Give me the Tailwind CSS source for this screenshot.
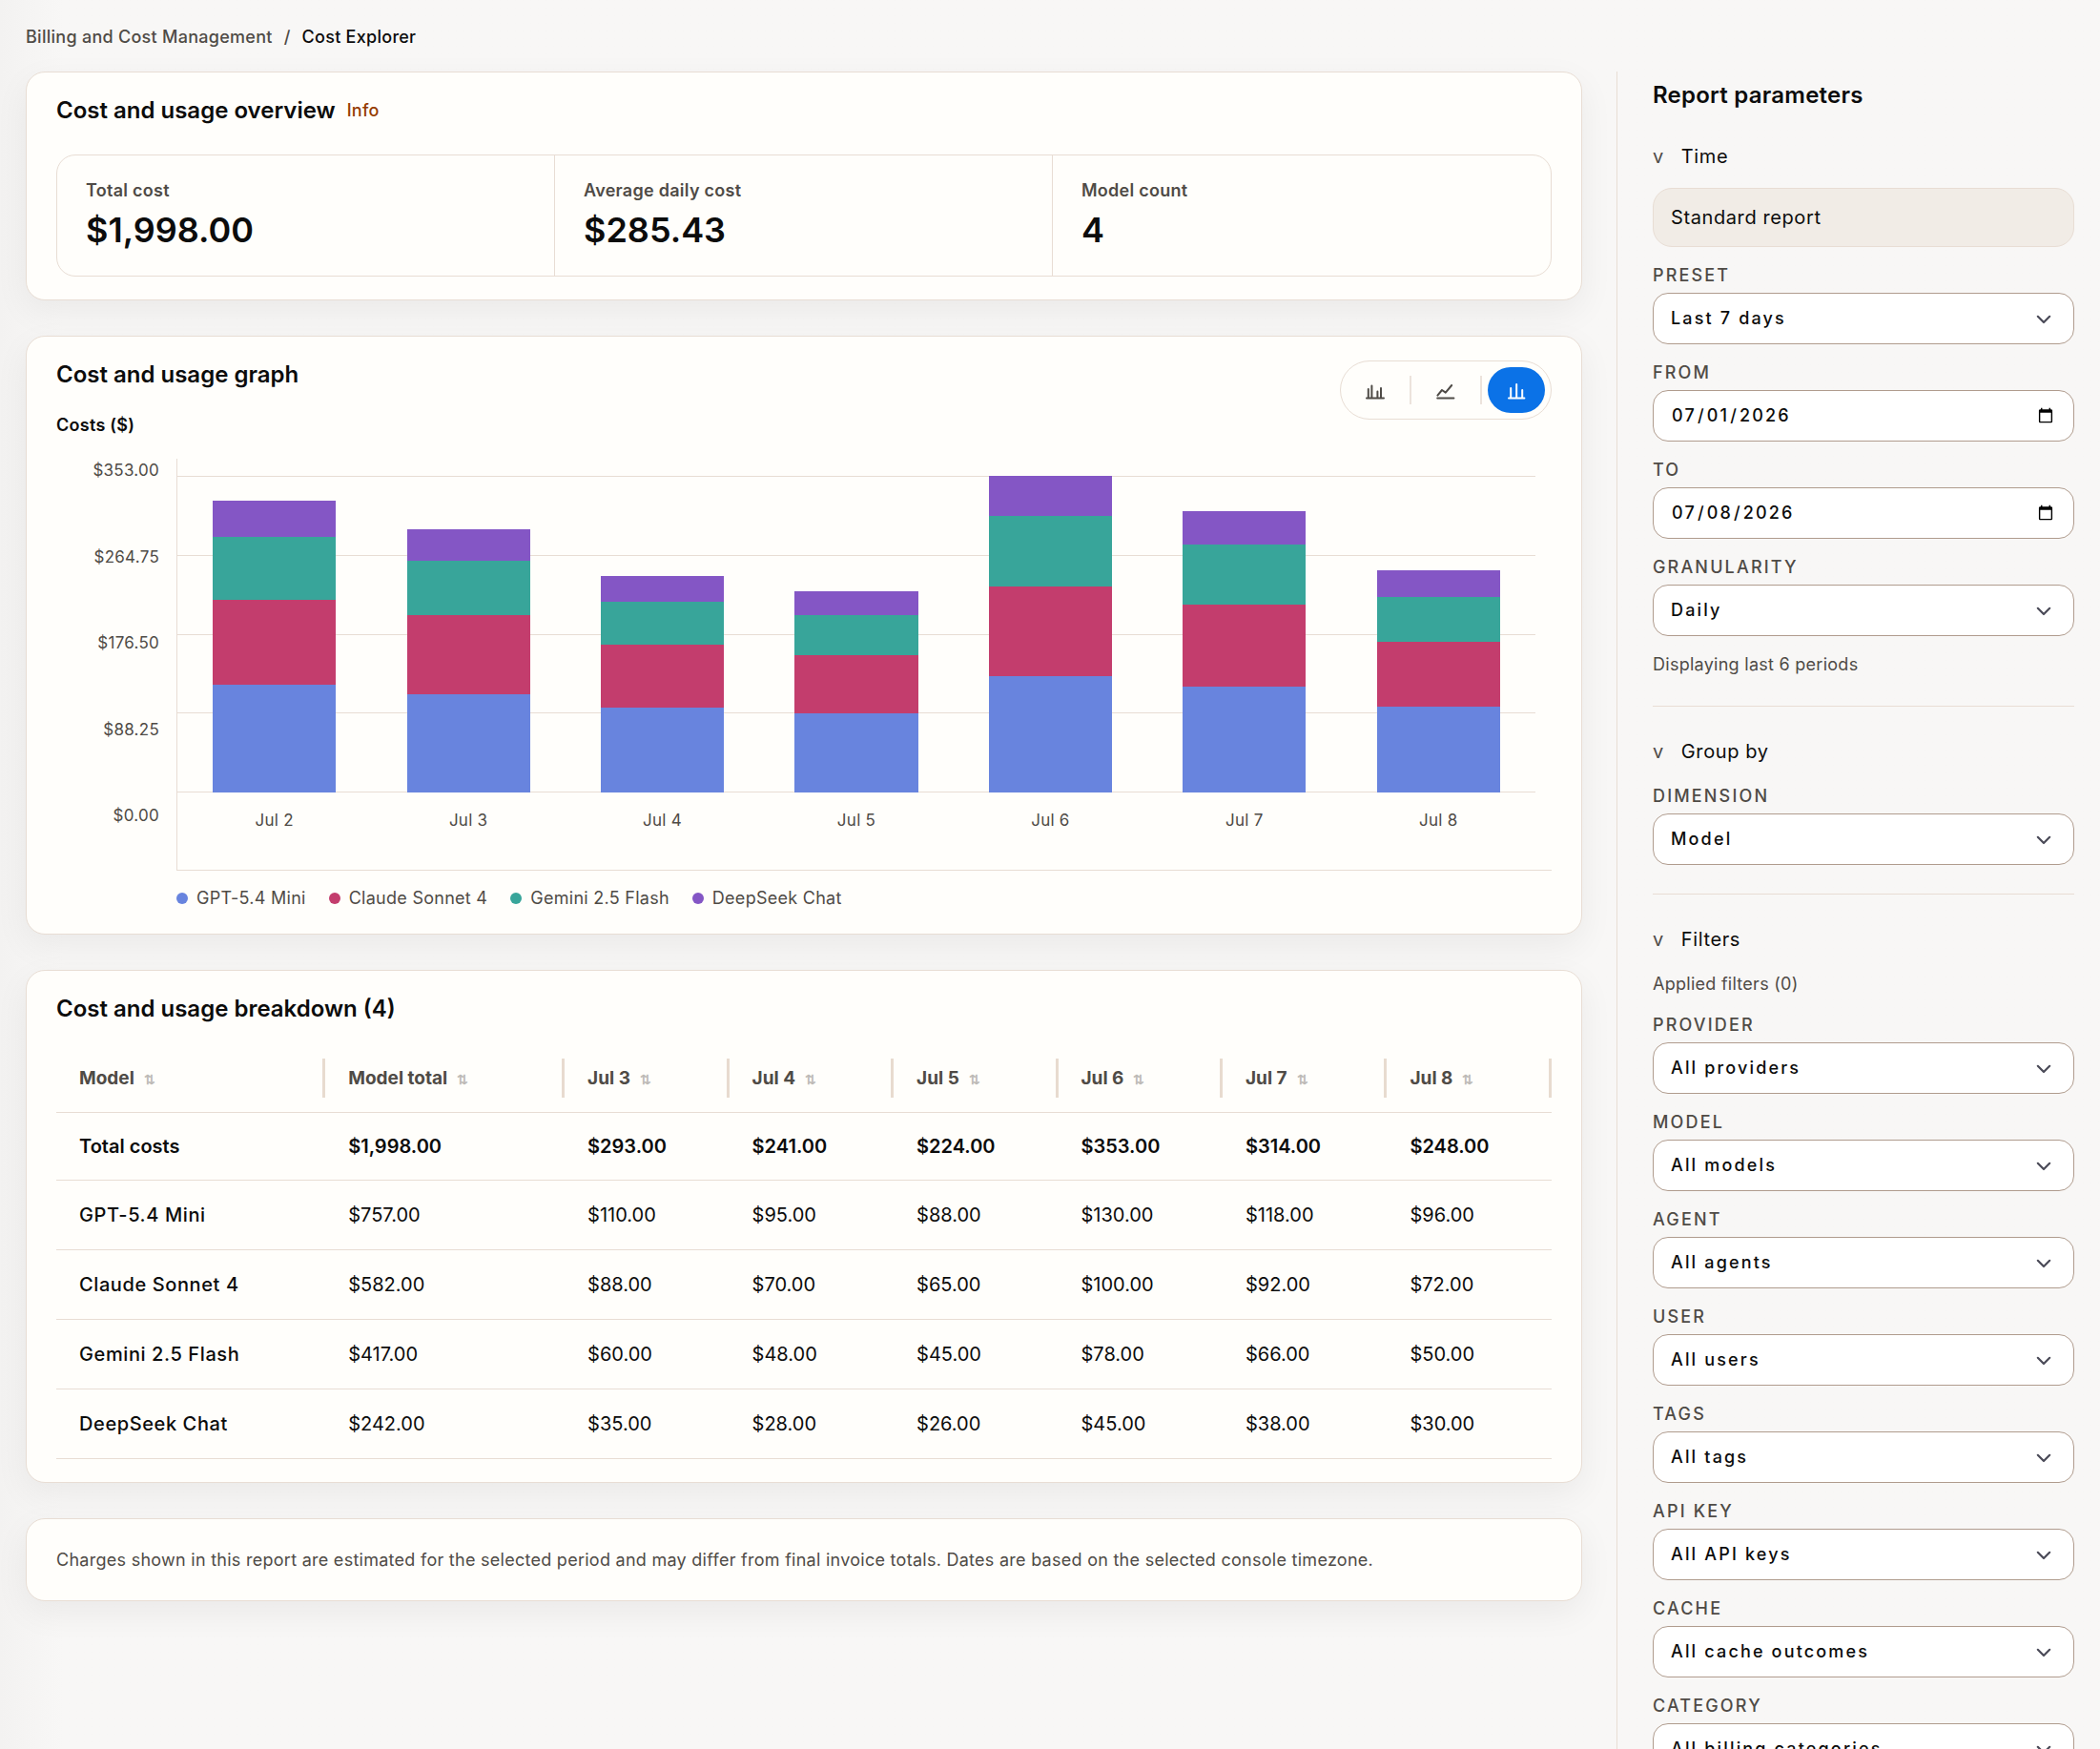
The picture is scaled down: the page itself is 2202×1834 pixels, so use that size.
<!DOCTYPE html>
<html lang="en">
<head>
  <meta charset="UTF-8">
  <meta name="viewport" content="width=device-width, initial-scale=1.0">
  <title>Cost Explorer</title>
  <script src="https://cdn.jsdelivr.net/npm/@tailwindcss/browser@4"></script>
</head>
<body class="bg-[#f8f7f6] bg-linear-to-r from-[#f3f2f1] from-0% to-[#f8f7f6] to-3% font-[Inter,sans-serif] text-lg text-[#0c0c0c]">
  <div class="h-screen overflow-hidden">
    <!-- Breadcrumb -->
    <nav class="flex gap-3 px-[27px] pt-[25px] pb-[23px] font-medium leading-[27px] tracking-[0.015em]">
      <a href="#" class="text-[#4f4b46]">Billing and Cost Management</a>
      <span class="text-[#4f4b46]">/</span>
      <span>Cost Explorer</span>
    </nav>

    <div class="flex gap-9 px-[27px]">
      <main class="flex min-w-0 flex-1 flex-col gap-[37px]">
        <!-- Overview -->
        <section class="rounded-[20px] border border-[#e8ddd4] bg-[#fffefb] px-[31px] pt-[22px] pb-6 shadow-[0_12px_36px_rgba(0,0,0,0.06)]">
          <div class="flex items-center gap-3">
            <h2 class="text-2xl font-semibold leading-9">Cost and usage overview</h2>
            <a href="#" class="font-medium tracking-[0.015em] text-[#963c00]">Info</a>
          </div>
          <dl class="mt-7 grid grid-cols-3 divide-x divide-[#e8ddd4] rounded-[20px] border border-[#e8ddd4]">
            <div class="px-[30px] pt-6 pb-[26px]">
              <dt class="font-semibold leading-[26px] tracking-[0.015em] text-[#4f4b46]">Total cost</dt>
              <dd class="mt-1.5 text-4xl font-semibold leading-[44px]">$1,998.00</dd>
            </div>
            <div class="px-[30px] pt-6 pb-[26px]">
              <dt class="font-semibold leading-[26px] tracking-[0.015em] text-[#4f4b46]">Average daily cost</dt>
              <dd class="mt-1.5 text-4xl font-semibold leading-[44px]">$285.43</dd>
            </div>
            <div class="px-[30px] pt-6 pb-[26px]">
              <dt class="font-semibold leading-[26px] tracking-[0.015em] text-[#4f4b46]">Model count</dt>
              <dd class="mt-1.5 text-4xl font-semibold leading-[44px]">4</dd>
            </div>
          </dl>
        </section>

        <!-- Graph -->
        <section class="rounded-[20px] border border-[#e8ddd4] bg-[#fffefb] px-[31px] pt-[22px] pb-6 shadow-[0_12px_36px_rgba(0,0,0,0.06)]">
          <div class="flex items-start justify-between">
            <div>
              <h2 class="text-2xl font-semibold leading-9">Cost and usage graph</h2>
              <p class="mt-5 font-semibold leading-[30px] tracking-[0.015em]">Costs ($)</p>
            </div>
            <div class="mt-[3px] flex items-center gap-1.5 rounded-full border border-[#e8ddd4] p-1.5 text-[#4f4b46]">
              <button aria-label="Grouped bars" class="grid h-12 w-[60px] place-items-center rounded-full">
                <svg class="size-6" viewBox="0 0 24 24" fill="none" stroke="currentColor" stroke-width="2" stroke-linecap="round"><path d="M3 20.4h18M4.8 20V11M8.4 20V7.4M14.4 20v-6.4M18 20V10"/></svg>
              </button>
              <span class="h-[30px] w-0.5 bg-[#ece3dc]"></span>
              <button aria-label="Line" class="grid h-12 w-[60px] place-items-center rounded-full">
                <svg class="size-6" viewBox="0 0 24 24" fill="none" stroke="currentColor" stroke-width="2" stroke-linecap="round" stroke-linejoin="round"><path d="M3.2 20.4h17.2M3.4 17.6l4.6-5.6 3.8 2.6L18.2 7"/></svg>
              </button>
              <span class="h-[30px] w-0.5 bg-[#ece3dc]"></span>
              <button aria-label="Stacked bars" aria-pressed="true" class="grid h-12 w-[60px] place-items-center rounded-full bg-[#0b72e7] text-white">
                <svg class="size-6" viewBox="0 0 24 24" fill="none" stroke="currentColor" stroke-width="2" stroke-linecap="round"><path d="M4 20.4h16.4M6.2 20V10M12.2 20V6M18.2 20v-8"/></svg>
              </button>
            </div>
          </div>

          <div class="mt-5 flex gap-[18px]">
            <div class="flex h-[387px] w-[108px] flex-col justify-between text-right text-[17px] leading-[25px] tracking-[0.015em] text-[#4f4b46]">
              <span>$353.00</span>
              <span>$264.75</span>
              <span>$176.50</span>
              <span>$88.25</span>
              <span>$0.00</span>
            </div>
            <div class="min-w-0 flex-1">
              <div class="h-[432px] border-b border-l border-[#e8ddd4] pt-[18px] pr-[17px]">
                <div class="grid h-[332px]">
                  <div class="col-start-1 row-start-1 flex flex-col justify-between">
                    <span class="h-px bg-[#e8ddd4]"></span>
                    <span class="h-px bg-[#e8ddd4]"></span>
                    <span class="h-px bg-[#e8ddd4]"></span>
                    <span class="h-px bg-[#e8ddd4]"></span>
                    <span class="h-px bg-[#e8ddd4]"></span>
                  </div>
                  <div id="bars" class="col-start-1 row-start-1 grid grid-cols-7 items-end"></div>
                </div>
                <div id="days" class="mt-4 grid grid-cols-7 text-center text-[17px] leading-[26px] tracking-[0.015em] text-[#4f4b46]"></div>
              </div>
              <ul id="legend" class="mt-[15px] flex gap-6 leading-[27px] tracking-[0.015em] text-[#4f4b46]"></ul>
            </div>
          </div>
        </section>

        <!-- Breakdown -->
        <section class="rounded-[20px] border border-[#e8ddd4] bg-[#fffefb] px-[31px] pt-[22px] pb-6 shadow-[0_12px_36px_rgba(0,0,0,0.06)]">
          <h2 class="text-2xl font-semibold leading-9">Cost and usage breakdown (4)</h2>
          <table class="mt-4 w-full table-fixed text-left text-xl">
            <thead>
              <tr id="head" class="border-b border-[#e8ddd4] text-[#4f4b46]"></tr>
            </thead>
            <tbody id="rows"></tbody>
          </table>
        </section>

        <!-- Footnote -->
        <section class="rounded-[20px] border border-[#e8ddd4] bg-[#fffefb] px-[31px] py-7 leading-[29px] tracking-[0.015em] text-[#4f4b46] shadow-[0_12px_36px_rgba(0,0,0,0.06)]">
          <p>Charges shown in this report are estimated for the selected period and may differ from final invoice totals. Dates are based on the selected console timezone.</p>
        </section>
      </main>

      <!-- Parameters -->
      <aside class="w-[480px] shrink-0 border-l border-[#e8ddd4] pt-[7px] pl-[37px]">
        <h2 class="text-2xl font-semibold leading-9 tracking-[0.01em]">Report parameters</h2>

        <section class="mt-[31px] border-b border-[#e8ddd4] pb-[30px]">
          <button class="flex items-baseline gap-[18px] text-xl leading-[30px] tracking-[0.03em]"><span class="text-[#4f4b46]">v</span>Time</button>
          <p class="mt-[18px] rounded-[20px] border border-[#e8ddd4] bg-[#f1ece6] px-[18px] py-[15px] text-xl leading-[30px] tracking-[0.03em]">Standard report</p>
          <div id="time" class="mt-[18px] flex flex-col gap-[18px]"></div>
          <p class="mt-4 leading-[27px] tracking-[0.015em] text-[#4f4b46]">Displaying last 6 periods</p>
        </section>

        <section class="mt-8 border-b border-[#e8ddd4] pb-[30px]">
          <button class="flex items-baseline gap-[18px] text-xl leading-[30px] tracking-[0.03em]"><span class="text-[#4f4b46]">v</span>Group by</button>
          <div id="group" class="mt-5 flex flex-col gap-[18px]"></div>
        </section>

        <section class="mt-8">
          <button class="flex items-baseline gap-[18px] text-xl leading-[30px] tracking-[0.03em]"><span class="text-[#4f4b46]">v</span>Filters</button>
          <p class="mt-[17px] leading-[30px] tracking-[0.015em] text-[#4f4b46]">Applied filters (0)</p>
          <div id="filters" class="mt-4 flex flex-col gap-[18px]"></div>
        </section>
      </aside>
    </div>
  </div>

  <script>
    const days = ['Jul 2', 'Jul 3', 'Jul 4', 'Jul 5', 'Jul 6', 'Jul 7', 'Jul 8'];
    const models = [
      { name: 'GPT-5.4 Mini', color: '#6884de', costs: [120, 110, 95, 88, 130, 118, 96] },
      { name: 'Claude Sonnet 4', color: '#c33d6d', costs: [95, 88, 70, 65, 100, 92, 72] },
      { name: 'Gemini 2.5 Flash', color: '#38a59a', costs: [70, 60, 48, 45, 78, 66, 50] },
      { name: 'DeepSeek Chat', color: '#8456c5', costs: [40, 35, 28, 26, 45, 38, 30] },
    ];
    const sum = (list) => list.reduce((a, b) => a + b, 0);
    const money = (n) => '$' + n.toLocaleString('en-US', { minimumFractionDigits: 2 });
    const totals = days.map((_, i) => sum(models.map(m => m.costs[i])));
    const max = Math.max(...totals);

    // chart
    document.getElementById('bars').innerHTML = days.map((_, i) => `
      <div class="mx-auto flex w-[63.5%] flex-col-reverse" style="height:${totals[i] / max * 100}%">
        ${models.map(m => `<div style="height:${m.costs[i] / totals[i] * 100}%;background:${m.color}"></div>`).join('')}
      </div>`).join('');
    document.getElementById('days').innerHTML = days.map(d => `<span>${d}</span>`).join('');
    document.getElementById('legend').innerHTML = models.map(m => `
      <li class="flex items-center gap-[9px]"><span class="size-3 rounded-full" style="background:${m.color}"></span>${m.name}</li>`).join('');

    // table
    const widths = ['w-[18%]', 'w-[16%]', 'w-[11%]', 'w-[11%]', 'w-[11%]', 'w-[11%]', 'w-[11%]', 'w-[11%]'];
    document.getElementById('head').innerHTML = ['Model', 'Model total', ...days.slice(1)].map((h, i) => `
      <th scope="col" class="${widths[i]} pt-[18px] pb-[15px] pl-6 text-[19px] font-bold">
        <div class="flex h-[41px] items-center gap-2.5 border-r-3 border-[#e8dbcf] leading-[30px]">${h}<span class="pt-0.5 text-sm text-[#bdbab6]">⇅</span></div>
      </th>`).join('');
    const cells = (costs) => [sum(costs), ...costs.slice(1)].map(money);
    document.getElementById('rows').innerHTML = `
      <tr class="h-[71px] border-b border-[#e8ddd4] font-semibold">
        <th scope="row" class="pl-6 font-semibold">Total costs</th>
        ${cells(totals).map(c => `<td class="pl-6">${c}</td>`).join('')}
      </tr>` + models.map(m => `
      <tr class="h-[73px] border-b border-[#e8ddd4]">
        <th scope="row" class="pl-6 font-medium tracking-[0.03em]">${m.name}</th>
        ${cells(m.costs).map(c => `<td class="pl-6">${c}</td>`).join('')}
      </tr>`).join('');

    // form fields
    const label = (name) => `<span class="block leading-6 uppercase tracking-[0.12em] text-[#4f4b46]">${name}</span>`;
    const select = ([name, value]) => `
      <label class="block font-medium">${label(name)}
        <span class="mt-1.5 grid items-center">
          <select class="col-start-1 row-start-1 h-[54px] w-full appearance-none rounded-2xl border border-[#b09c8e] bg-white px-[18px] tracking-[0.12em] text-[#0c0c0c]"><option>${value}</option></select>
          <svg class="pointer-events-none col-start-1 row-start-1 mr-5 size-6 justify-self-end" viewBox="0 0 24 24" fill="none" stroke="#4b4b58" stroke-width="2.2" stroke-linecap="round" stroke-linejoin="round"><path d="M5.8 9.8l6.2 6.2 6.2-6.2"/></svg>
        </span>
      </label>`;
    const date = ([name, value]) => `
      <label class="block font-medium">${label(name)}
        <input type="date" value="${value}" class="mt-1.5 block h-[54px] w-full rounded-2xl border border-[#b09c8e] bg-white px-[18px] tracking-[0.12em] text-[#0c0c0c]">
      </label>`;
    document.getElementById('time').innerHTML = select(['Preset', 'Last 7 days'])
      + date(['From', '2026-07-01']) + date(['To', '2026-07-08']) + select(['Granularity', 'Daily']);
    document.getElementById('group').innerHTML = select(['Dimension', 'Model']);
    document.getElementById('filters').innerHTML = [
      ['Provider', 'All providers'],
      ['Model', 'All models'],
      ['Agent', 'All agents'],
      ['User', 'All users'],
      ['Tags', 'All tags'],
      ['API key', 'All API keys'],
      ['Cache', 'All cache outcomes'],
      ['Category', 'All billing categories'],
    ].map(select).join('');
  </script>
</body>
</html>
